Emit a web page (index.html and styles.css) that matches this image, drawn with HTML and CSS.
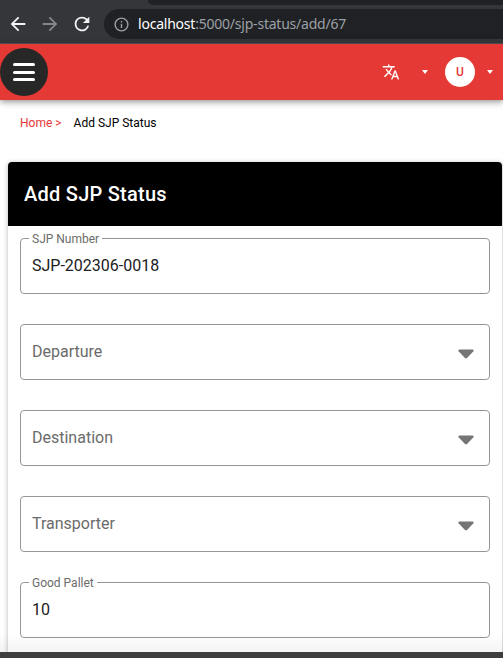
FILE: index.html
```html
<!DOCTYPE html>
<html lang="en">
<head>
<meta charset="utf-8">
<title>Add SJP Status</title>
<link rel="stylesheet" href="styles.css">
</head>
<body>
<div class="window">
  <div class="browser">
    <div class="tabs"><span class="tab"></span><span class="strip"></span></div>
    <div class="toolbar">
      <svg class="nav" viewBox="0 0 24 24"><path d="M20 11H7.83l5.59-5.59L12 4l-8 8 8 8 1.41-1.41L7.83 13H20v-2z"/></svg>
      <svg class="nav dim" viewBox="0 0 24 24"><path d="M12 4l-1.41 1.41L16.17 11H4v2h12.17l-5.58 5.59L12 20l8-8z"/></svg>
      <svg class="nav" viewBox="0 0 24 24"><path d="M17.65 6.35A7.95 7.95 0 0 0 12 4a8 8 0 1 0 7.73 10h-2.08A6 6 0 1 1 12 6c1.66 0 3.14.69 4.22 1.78L13 11h7V4l-2.35 2.35z"/></svg>
      <div class="address">
        <svg class="info" viewBox="0 0 24 24"><path d="M11 17h2v-6h-2v6zm1-15a10 10 0 1 0 0 20 10 10 0 0 0 0-20zm0 18a8 8 0 1 1 0-16 8 8 0 0 1 0 16zM11 9h2V7h-2v2z"/></svg>
        <span class="url"><b>localhost</b>:5000/sjp-status/add/67</span>
      </div>
    </div>
  </div>
  <header class="appbar">
    <button class="menu" aria-label="Menu"><span></span><span></span><span></span></button>
    <div class="actions">
      <svg class="translate" viewBox="0 0 24 24"><path d="M12.87 15.07l-2.54-2.51.03-.03A17.52 17.52 0 0 0 14.07 6H17V4h-7V2H8v2H1v1.99h11.17C11.5 7.92 10.44 9.75 9 11.35 8.07 10.32 7.3 9.19 6.69 8h-2c.73 1.63 1.73 3.17 2.98 4.56l-5.09 5.02L4 19l5-5 3.11 3.11.76-2.04zM18.5 10h-2L12 22h2l1.12-3h4.75L21 22h2l-4.5-12zm-2.62 7l1.62-4.33L19.12 17h-3.24z"/></svg>
      <i class="caret"></i>
      <span class="avatar">U</span>
      <i class="caret"></i>
    </div>
  </header>
  <main class="page">
    <nav class="crumbs"><a>Home &gt;</a><span>Add SJP Status</span></nav>
    <section class="card">
      <h1>Add SJP Status</h1>
      <form class="form">
        <div class="field"><label class="legend">SJP Number</label><span class="value">SJP-202306-0018</span></div>
        <div class="field"><span class="hint">Departure</span><svg class="arrow" viewBox="0 0 16 10"><path d="M1.2.5h13.6q1.3.5.6 1.7L9.3 8.7q-1.3 1.1-2.6 0L.6 2.2Q-.1 1 1.2.5z"/></svg></div>
        <div class="field"><span class="hint">Destination</span><svg class="arrow" viewBox="0 0 16 10"><path d="M1.2.5h13.6q1.3.5.6 1.7L9.3 8.7q-1.3 1.1-2.6 0L.6 2.2Q-.1 1 1.2.5z"/></svg></div>
        <div class="field"><span class="hint">Transporter</span><svg class="arrow" viewBox="0 0 16 10"><path d="M1.2.5h13.6q1.3.5.6 1.7L9.3 8.7q-1.3 1.1-2.6 0L.6 2.2Q-.1 1 1.2.5z"/></svg></div>
        <div class="field"><label class="legend">Good Pallet</label><span class="value">10</span></div>
      </form>
    </section>
  </main>
  <footer class="edge"></footer>
</div>
</body>
</html>
```
FILE: styles.css
```css
* { box-sizing: border-box; }
body { margin: 0; font-family: Roboto, "Liberation Sans", sans-serif; background: #fff; }
.window { display: flex; flex-direction: column; width: 503px; height: 658px; overflow: hidden; }

.browser { flex: none; height: 44px; background: #35363a; border-bottom: 1px solid #505154; }
.tabs { display: flex; height: 5px; background: #35363a; }
.tab { width: 148px; }
.strip { flex: 1; background: #202124; border-bottom-left-radius: 5px; }
.toolbar { display: flex; align-items: center; height: 38px; padding-left: 7px; }
.nav { width: 22px; height: 22px; margin-right: 10px; fill: #f1f3f4; flex: none; }
.nav.dim { fill: #86878a; }
.address { display: flex; align-items: center; flex: 1; height: 30px; margin-left: 1px; background: #202124; border-radius: 15px 0 0 15px; padding-left: 9px; }
.info { width: 17px; height: 17px; fill: #9aa0a6; margin-right: 8px; }
.url { font: 14px/20px "Noto Sans", "Open Sans", sans-serif; letter-spacing: -.22px; color: #9aa0a6; white-space: nowrap; }
.url b { font-weight: 400; color: #fff; }

.appbar { position: relative; z-index: 1; flex: none; display: flex; align-items: center; justify-content: space-between; height: 56px; background: #e53935; box-shadow: 0 2px 4px -1px rgba(0,0,0,.2), 0 4px 5px rgba(0,0,0,.14), 0 1px 10px rgba(0,0,0,.12); }
.menu { width: 48px; height: 48px; border: 0; padding: 0; border-radius: 50%; background: #272727; display: flex; flex-direction: column; align-items: center; justify-content: center; gap: 4.5px; }
.menu span { width: 22px; height: 3px; border-radius: 1.5px; background: #fff; }
.actions { display: flex; align-items: center; padding-right: 10px; }
.translate { width: 18px; height: 18px; fill: #fff; margin-right: 22px; }
.caret { border: 3.5px solid transparent; border-top: 4px solid #fff; border-bottom: 0; }
.avatar { width: 30px; height: 30px; margin: 0 12px 0 17px; border-radius: 50%; background: #fff; color: #e53935; font: 500 12px/30px Roboto, sans-serif; text-align: center; }

.page { flex: 1; min-height: 0; overflow: hidden; padding: 0 1px 0 8px; background: linear-gradient(#fff calc(100% - 20px), #f3f3f3); }
.crumbs { display: flex; gap: 12px; height: 62px; padding: 15px 12px 0; font-size: 12px; line-height: 16px; color: #000; }
.crumbs a { color: #e53935; }
.card { height: 530px; border-radius: 4px 4px 0 0; box-shadow: 0 1px 5px rgba(0,0,0,.3); background: linear-gradient(#fff 472px, #f4f4f4 490px); }
.card h1 { margin: 0; height: 64px; padding-left: 16px; border-radius: 4px 4px 0 0; background: #000; color: #fff; font-size: 20px; font-weight: 500; line-height: 64px; letter-spacing: .25px; }
.form { display: grid; gap: 30px; padding: 12px; }
.field { position: relative; display: flex; align-items: center; justify-content: space-between; height: 56px; padding: 0 15px 0 11px; border: 1px solid #969696; border-radius: 4px; font-size: 16px; line-height: 20px; }
.value { color: #212121; }
.hint { color: #6b6b6b; }
.legend { position: absolute; top: -8px; left: 8px; padding: 0 3px; background: #fff; color: #6b6b6b; font-size: 12px; line-height: 16px; }
.arrow { width: 16px; height: 10px; fill: #757575; margin-top: 4px; }
.edge { flex: none; height: 6px; background: #3e3e3c; }
```
